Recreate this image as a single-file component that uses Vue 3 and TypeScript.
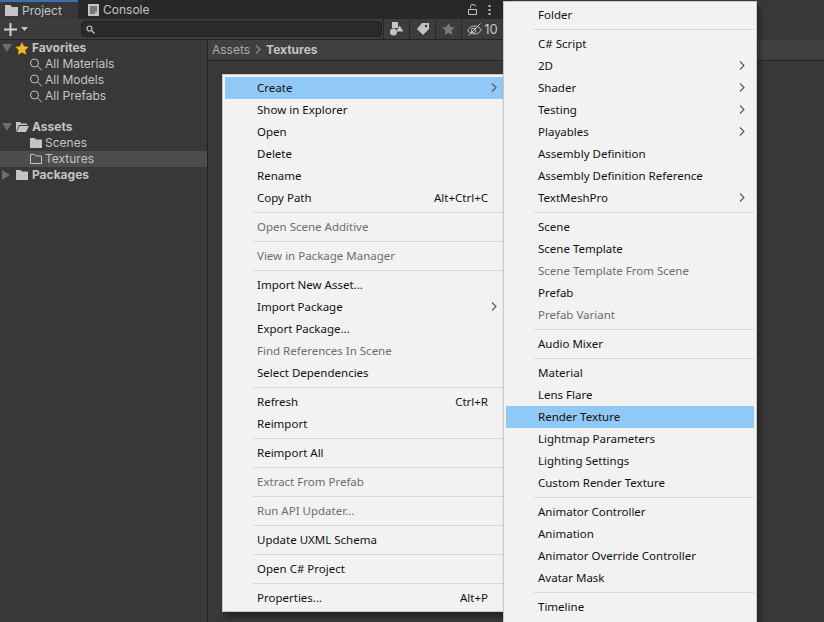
<template>
  <div class="editor">
    <div class="tabbar">
      <div class="tab active">
        <svg width="13" height="11" viewBox="0 0 13 11"><path d="M0 0h5l2 2h6v9H0z" fill="#c4c4c4" /></svg>
        <span>Project</span>
      </div>
      <div class="tab">
        <svg width="11" height="12" viewBox="0 0 11 12"><path d="M0 0h11v12H0z" fill="#c4c4c4" /><path d="M2 3h7M2 5h7M2 7h7M2 9h5" stroke="#2a2a2a" /></svg>
        <span>Console</span>
      </div>
      <div class="tab-tools">
        <svg width="10" height="11" viewBox="0 0 10 11" fill="none" stroke="#c4c4c4"><path d="M2.500 4.500V2.500a2.500 2 0 0 1 5 0M.5 5.500h8v5h-8z" /></svg>
        <svg class="dots" width="3" height="10" viewBox="0 0 3 10" fill="#c4c4c4"><rect x=".5" width="2" height="2" /><rect x=".5" y="4" width="2" height="2" /><rect x=".5" y="8" width="2" height="2" /></svg>
      </div>
    </div>
    <div class="toolbar">
      <div class="add">
        <svg width="13" height="13" viewBox="0 0 13 13"><path d="M5.500 0h2v5.500H13v2H7.500V13h-2V7.500H0v-2h5.500z" fill="#d2d2d2" /></svg>
        <svg width="7" height="4" viewBox="0 0 7 4"><path d="M0 0h7L3.500 4z" fill="#c4c4c4" /></svg>
      </div>
      <div class="search">
        <svg width="9" height="9" viewBox="0 0 9 9" fill="none" stroke="#c4c4c4" stroke-width="1.200"><circle cx="3.500" cy="3.500" r="2.500" /><path d="M5.500 5.500L8.500 8.500" /></svg>
      </div>
      <div class="tool first">
        <svg width="14" height="14" viewBox="0 0 14 14" fill="#c4c4c4"><rect x="2" y="0" width="6" height="6" /><circle cx="3.500" cy="10" r="3.500" /><path d="M9.500 3.500l4 6h-7z" /></svg>
      </div>
      <div class="tool">
        <svg width="14" height="14" viewBox="0 0 14 14"><path d="M6 1h7v6l-6 6-6-6z" fill="#c4c4c4" /><circle cx="10" cy="4" r="1.200" fill="#2f2f2f" /></svg>
      </div>
      <div class="tool">
        <svg width="13" height="12" viewBox="0 0 13 12"><path d="M6.500 0l1.900 4 4.400.5-3.300 3 .9 4.400-3.900-2.200-3.900 2.200.9-4.400L.2 4.500 4.600 4z" fill="#7a7a7a" /></svg>
      </div>
      <div class="tool eye">
        <svg width="15" height="13" viewBox="0 0 15 13" fill="none" stroke="#c4c4c4"><path d="M.5 7.500c2-3 4-4.500 7-4.500s5 1.500 7 4c-2 2.500-4 4-7 4s-5-1-7-3.500z" /><circle cx="6.500" cy="7.500" r="2.200" /><path d="M1.500 12.500L13.500 .5" /></svg>
        <span>10</span>
      </div>
    </div>
    <div class="body">
      <aside class="tree">
        <div class="row top">
          <span class="arrow down"></span>
          <svg class="ico" width="13" height="13" viewBox="0 0 14 13"><path d="M7 0l2 4.300 4.700.6-3.400 3.200.9 4.700L7 10.500 2.800 12.800l.9-4.700L.3 4.900 5 4.300z" fill="#f5b31e" /></svg>
          <b>Favorites</b>
        </div>
        <div v-for="name in favorites" :key="name" class="row sub">
          <svg class="ico" width="13" height="13" viewBox="0 0 13 13" fill="none" stroke="#c4c4c4"><circle cx="5" cy="5" r="4" /><path d="M8 8l4.500 4.500" /></svg>
          <span>{{ name }}</span>
        </div>
        <div class="gap"></div>
        <div class="row top">
          <span class="arrow down"></span>
          <svg class="ico" width="14" height="12" viewBox="0 0 14 12"><path d="M1 1h4l1.500 1.500H12V4H4L1 11z" fill="#c4c4c4" /><path d="M4.500 5H14l-3 6H1.800z" fill="#c4c4c4" /></svg>
          <b>Assets</b>
        </div>
        <div class="row sub">
          <svg class="ico" width="12" height="10" viewBox="0 0 12 10"><path d="M0 0h4.500l1.500 1.500h6V10H0z" fill="#c4c4c4" /></svg>
          <span>Scenes</span>
        </div>
        <div class="row sub selected">
          <svg class="ico" width="12" height="10" viewBox="0 0 12 10"><path d="M.5 .5h4l1.500 1.500h5.500v7.500H.5z" fill="none" stroke="#c4c4c4" /></svg>
          <span>Textures</span>
        </div>
        <div class="row top">
          <span class="arrow right"></span>
          <svg class="ico" width="12" height="10" viewBox="0 0 12 10"><path d="M0 0h4.500l1.500 1.500h6V10H0z" fill="#c4c4c4" /></svg>
          <b>Packages</b>
        </div>
      </aside>
      <main class="content">
        <div class="crumbs">
          <span class="crumb-path">Assets</span>
          <svg width="6" height="9" viewBox="0 0 6 9" fill="none" stroke="#8a8a8a" stroke-width="1.300"><path d="M1 .5l4 4-4 4" /></svg>
          <b>Textures</b>
        </div>
      </main>
    </div>

    <div class="menu menu-main">
      <template v-for="(item, i) in mainMenu" :key="i">
        <div v-if="item.sep" class="sep"></div>
        <div v-else class="item" :class="{ off: item.off, on: item.on }">
          <span>{{ item.label }}</span>
          <span v-if="item.keys" class="keys">{{ item.keys }}</span>
          <svg v-if="item.sub" class="chev" width="6" height="9" viewBox="0 0 6 9" fill="none" stroke="#555" stroke-width="1.100"><path d="M1 .5l4 4-4 4" /></svg>
        </div>
      </template>
    </div>

    <div class="menu menu-create">
      <template v-for="(item, i) in createMenu" :key="i">
        <div v-if="item.sep" class="sep"></div>
        <div v-else class="item" :class="{ off: item.off, on: item.on }">
          <span>{{ item.label }}</span>
          <svg v-if="item.sub" class="chev" width="6" height="9" viewBox="0 0 6 9" fill="none" stroke="#555" stroke-width="1.100"><path d="M1 .5l4 4-4 4" /></svg>
        </div>
      </template>
    </div>
  </div>
</template>

<script setup lang="ts">
interface MenuItem {
  label?: string
  keys?: string
  sub?: boolean
  off?: boolean
  on?: boolean
  sep?: boolean
}

const favorites = ['All Materials', 'All Models', 'All Prefabs']

const mainMenu: MenuItem[] = [
  { label: 'Create', sub: true, on: true },
  { label: 'Show in Explorer' },
  { label: 'Open' },
  { label: 'Delete' },
  { label: 'Rename' },
  { label: 'Copy Path', keys: 'Alt+Ctrl+C' },
  { sep: true },
  { label: 'Open Scene Additive', off: true },
  { sep: true },
  { label: 'View in Package Manager', off: true },
  { sep: true },
  { label: 'Import New Asset...' },
  { label: 'Import Package', sub: true },
  { label: 'Export Package...' },
  { label: 'Find References In Scene', off: true },
  { label: 'Select Dependencies' },
  { sep: true },
  { label: 'Refresh', keys: 'Ctrl+R' },
  { label: 'Reimport' },
  { sep: true },
  { label: 'Reimport All' },
  { sep: true },
  { label: 'Extract From Prefab', off: true },
  { sep: true },
  { label: 'Run API Updater...', off: true },
  { sep: true },
  { label: 'Update UXML Schema' },
  { sep: true },
  { label: 'Open C# Project' },
  { sep: true },
  { label: 'Properties...', keys: 'Alt+P' }
]

const createMenu: MenuItem[] = [
  { label: 'Folder' },
  { sep: true },
  { label: 'C# Script' },
  { label: '2D', sub: true },
  { label: 'Shader', sub: true },
  { label: 'Testing', sub: true },
  { label: 'Playables', sub: true },
  { label: 'Assembly Definition' },
  { label: 'Assembly Definition Reference' },
  { label: 'TextMeshPro', sub: true },
  { sep: true },
  { label: 'Scene' },
  { label: 'Scene Template' },
  { label: 'Scene Template From Scene', off: true },
  { label: 'Prefab' },
  { label: 'Prefab Variant', off: true },
  { sep: true },
  { label: 'Audio Mixer' },
  { sep: true },
  { label: 'Material' },
  { label: 'Lens Flare' },
  { label: 'Render Texture', on: true },
  { label: 'Lightmap Parameters' },
  { label: 'Lighting Settings' },
  { label: 'Custom Render Texture' },
  { sep: true },
  { label: 'Animator Controller' },
  { label: 'Animation' },
  { label: 'Animator Override Controller' },
  { label: 'Avatar Mask' },
  { sep: true },
  { label: 'Timeline' }
]
</script>

<style>
html,
body {
  margin: 0;
  height: 100%;
  overflow: hidden;
  background: #383838;
}
</style>

<style scoped>
.editor {
  position: relative;
  width: 824px;
  height: 622px;
  overflow: hidden;
  display: flex;
  flex-direction: column;
  background: #383838;
  color: #c4c4c4;
  font-family: Inter, "Noto Sans", sans-serif;
  font-size: 12px;
}

.tabbar {
  flex: none;
  width: 510px;
  height: 19px;
  display: flex;
  background: #282828;
}

.tab {
  display: flex;
  align-items: center;
  gap: 4px;
  width: 78px;
  padding-left: 5px;
  box-sizing: border-box;
}

.tab.active {
  background: #383838;
  border-top: 2px solid #3a72b0;
}

.tab + .tab {
  padding-left: 10px;
  width: 90px;
}

.tab-tools {
  display: flex;
  align-items: center;
  padding-left: 300px;
}

.dots {
  margin-left: 10px;
}

.toolbar {
  flex: none;
  width: 510px;
  height: 20px;
  display: flex;
  align-items: center;
  background: #3c3c3c;
  border-bottom: 1px solid #232323;
}

.add {
  width: 81px;
  display: flex;
  align-items: center;
  gap: 4px;
  padding-left: 4px;
  box-sizing: border-box;
}

.search {
  width: 301px;
  height: 16px;
  display: flex;
  align-items: center;
  padding-left: 4px;
  box-sizing: border-box;
  background: #2a2a2a;
  border: 1px solid #212121;
  border-radius: 4px;
}

.tool {
  width: 26px;
  height: 20px;
  display: flex;
  align-items: center;
  justify-content: center;
  border-left: 1px solid #282828;
  box-sizing: border-box;
}

.tool.first {
  margin-left: 1px;
}

.eye {
  width: 42px;
  gap: 2px;
  font-size: 13px;
}

.body {
  flex: 1;
  display: flex;
  min-height: 0;
}

.tree {
  width: 207px;
  flex: none;
  line-height: 16px;
  border-right: 1px solid #232323;
}

.row {
  height: 16px;
  display: flex;
  align-items: center;
  white-space: nowrap;
}

.row.top {
  padding-left: 15px;
  position: relative;
}

.row.sub {
  padding-left: 29px;
}

.row.selected {
  background: #4d4d4d;
}

.row b {
  font-weight: 700;
  margin-left: 1px;
}

.ico {
  width: 14px;
  margin-right: 2px;
}

.gap {
  height: 15px;
}

.arrow {
  position: absolute;
  left: 2px;
  top: 4px;
  width: 0;
  height: 0;
}

.arrow.down {
  border-left: 5px solid transparent;
  border-right: 5px solid transparent;
  border-top: 8px solid #6e6e6e;
}

.arrow.right {
  border-top: 5px solid transparent;
  border-bottom: 5px solid transparent;
  border-left: 8px solid #6e6e6e;
  top: 3px;
}

.content {
  flex: 1;
}

.crumbs {
  height: 19px;
  padding: 0 0 1px 4px;
  display: flex;
  align-items: center;
  gap: 5px;
  background: #404040;
  border-bottom: 1px solid #232323;
}

.crumb-path {
  color: #a8a8a8;
}

.menu {
  position: absolute;
  box-sizing: border-box;
  padding: 2px;
  background: #f2f2f2;
  border: 1px solid #c8c8c8;
  box-shadow: 3px 5px 5px rgba(0, 0, 0, 0.35);
  color: #111;
  font-family: "Noto Sans", "Open Sans", sans-serif;
  font-size: 11.5px;
}

.menu-main {
  left: 222px;
  top: 74px;
  width: 287px;
  height: 538px;
}

.menu-create {
  left: 503px;
  top: 1px;
  width: 254px;
  height: 640px;
}

.item {
  position: relative;
  height: 22px;
  box-sizing: border-box;
  display: flex;
  align-items: center;
  justify-content: space-between;
  padding: 0 18px 1px 32px;
  white-space: nowrap;
}

.item.on {
  background: #90c8f6;
}

.item.off {
  color: #6d6d6d;
}

.chev {
  position: absolute;
  right: 9px;
  top: 6px;
}

.sep {
  height: 1px;
  margin: 3px 0 3px 28px;
  background: #d7d7d7;
}
</style>
